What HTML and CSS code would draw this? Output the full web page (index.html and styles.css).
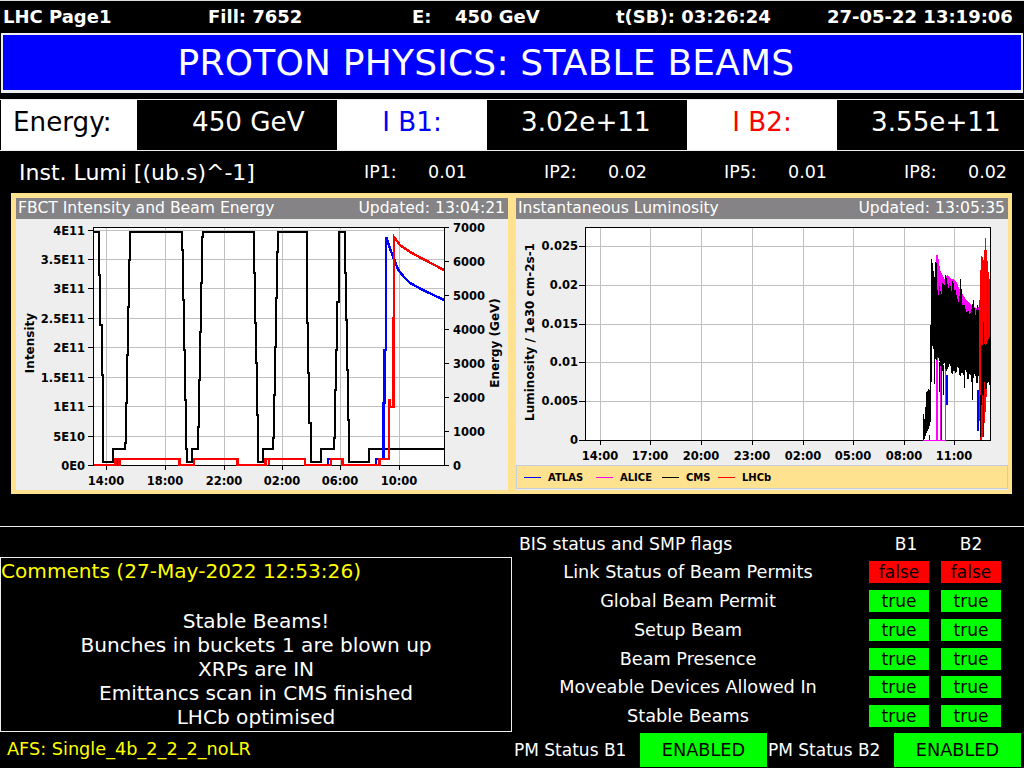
FILE: index.html
```html
<!DOCTYPE html>
<html lang="en">
<head>
    <meta charset="UTF-8">
    <title>LHC Page1</title>
    <link rel="stylesheet" href="styles.css">
</head>
<body>
    <!-- Top status line -->
    <div class="top-bar">
        <span class="top-page">LHC Page1</span>
        <span class="top-fill">Fill: 7652</span>
        <span class="top-e">E:</span>
        <span class="top-energy">450 GeV</span>
        <span class="top-sb">t(SB): 03:26:24</span>
        <span>27-05-22 13:19:06</span>
    </div>

    <div class="mode-title">PROTON PHYSICS: STABLE BEAMS</div>

    <!-- Energy and intensities -->
    <div class="readings">
        <div class="cell-label cell-energy">Energy:</div>
        <div class="cell-value cell-value-first">450 GeV</div>
        <div class="cell-label cell-b1">I B1:</div>
        <div class="cell-value">3.02e+11</div>
        <div class="cell-label cell-b2">I B2:</div>
        <div class="cell-value cell-value-last">3.55e+11</div>
    </div>

    <div class="lumi-section">
        <div class="lumi-row">
            <div class="lumi-title">Inst. Lumi [(ub.s)^-1]</div>
            <div class="lumi-ip"><span class="ip-name">IP1:</span><span>0.01</span></div>
            <div class="lumi-ip"><span class="ip-name">IP2:</span><span>0.02</span></div>
            <div class="lumi-ip"><span class="ip-name">IP5:</span><span>0.01</span></div>
            <div class="lumi-ip"><span class="ip-name">IP8:</span><span>0.02</span></div>
        </div>

        <div class="charts">
            <!-- FBCT chart: the viewBox uses page coordinates -->
            <div class="chart-panel">
                <div class="chart-head"><span>FBCT Intensity and Beam Energy</span><span>Updated: 13:04:21</span></div>
                <svg class="chart-svg chart-tall" viewBox="16 219 492 271">
                    <rect x="93.5" y="227.5" width="351" height="238" fill="#fff"/>
                    <path class="grid" d="M106.5 228V465M165.5 228V465M224.5 228V465M282.5 228V465M340.5 228V465M399.5 228V465M94 230.5H444M94 259.5H444M94 288.5H444M94 318.5H444M94 347.5H444M94 377.5H444M94 406.5H444M94 436.5H444"/>
                    <path class="axis" d="M93.5 227.5H444.5V465.5H93.5ZM88 230.5H93M88 259.5H93M88 288.5H93M88 318.5H93M88 347.5H93M88 377.5H93M88 406.5H93M88 436.5H93M88 465.5H93M444 227.5H449M444 261.5H449M444 295.5H449M444 329.5H449M444 363.5H449M444 397.5H449M444 431.5H449M444 465.5H449M106.5 465V470M165.5 465V470M224.5 465V470M282.5 465V470M340.5 465V470M399.5 465V470"/>
                    <path class="curve" stroke="#000" d="M94 232H99V275H100V325H101.5V375H102.5V425H103V462H112.7V449H124.7V443H125.7V403H126.7V355H128V307H129.3V260H130V232H181.7V250H182.7V300H184V350H185V400H186V449H187.3V462H191.7V449H198V427H199V380H200V332H201V283H202V237H203V232H254V273H255V323H256V363H257.3V415H258.3V462H263V449H272.7V438H274V395H275V347H276.3V298H277.3V252H278.3V232H306.7V273H307.3V323H308.3V373H309.3V423H311V462H320.7V449H334V438H335.3V390H336.3V350H337.3V302H338.7V252H339.3V232H345V273H345.7V320H346.7V370H347.7V420H348.7V462H368.7V449H444"/>
                    <path class="curve curve-beam" stroke="#00f" d="M118 465V459M328 465V459H330M376 465V459H383.3V403H384.7V350H386V237L391.7 253L398.3 270L404 277L410 283L423 290L444 300"/>
                    <path class="curve curve-beam" stroke="#f00" d="M94 465H115.7V459H119V465H120V459H179.3V465H194V459H237.7V465H265.7V459H269V465V459H305V465H331V459H342.7V465H379.3V459H389V400H390V407H393.3V318H394V237L400 245L410 252L423 259L444 270"/>
                    <g class="tick-text">
                        <text x="85" y="234.5">4E11</text>
                        <text x="85" y="263.5">3.5E11</text>
                        <text x="85" y="292.5">3E11</text>
                        <text x="85" y="322.5">2.5E11</text>
                        <text x="85" y="351.5">2E11</text>
                        <text x="85" y="381.5">1.5E11</text>
                        <text x="85" y="410.5">1E11</text>
                        <text x="85" y="440.5">5E10</text>
                        <text x="85" y="469.5">0E0</text>
                    </g>
                    <g class="tick-text tick-start">
                        <text x="453" y="231.5">7000</text>
                        <text x="453" y="265.5">6000</text>
                        <text x="453" y="299.5">5000</text>
                        <text x="453" y="333.5">4000</text>
                        <text x="453" y="367.5">3000</text>
                        <text x="453" y="401.5">2000</text>
                        <text x="453" y="435.5">1000</text>
                        <text x="453" y="469.5">0</text>
                    </g>
                    <g class="tick-text tick-mid">
                        <text x="106" y="485">14:00</text>
                        <text x="165" y="485">18:00</text>
                        <text x="224" y="485">22:00</text>
                        <text x="282" y="485">02:00</text>
                        <text x="340" y="485">06:00</text>
                        <text x="399" y="485">10:00</text>
                    </g>
                    <text class="axis-title" transform="translate(34 343) rotate(-90)">Intensity</text>
                    <text class="axis-title" transform="translate(499 343) rotate(-90)">Energy (GeV)</text>
                </svg>
            </div>

            <!-- Luminosity chart -->
            <div class="chart-panel">
                <div class="chart-head"><span>Instantaneous Luminosity</span><span>Updated: 13:05:35</span></div>
                <svg class="chart-svg chart-short" viewBox="516 219 492 246">
                    <rect x="585.5" y="227.5" width="405" height="213" fill="#fff"/>
                    <path class="grid" d="M600.5 228V440M650.5 228V440M701.5 228V440M752.5 228V440M803.5 228V440M853.5 228V440M904.5 228V440M954.5 228V440M586 246.5H990M586 285.5H990M586 324.5H990M586 362.5H990M586 401.5H990"/>
                    <path class="axis" d="M585.5 227.5H990.5V440.5H585.5ZM579 246.5H585M579 285.5H585M579 324.5H585M579 362.5H585M579 401.5H585M579 440.5H585M600.5 440V445M650.5 440V445M701.5 440V445M752.5 440V445M803.5 440V445M853.5 440V445M904.5 440V445M954.5 440V445"/>
                    <polygon class="noise" fill="#f0f" points="936,255 938,255 940,270 945,280 947,275 950,278 955,280 957,283 960,290 965,298 968,302 972,305 975,308 979,307 979,340 936,340"/>
                    <path class="spikes" stroke="#f0f" d="M923 440H946M936.5 340V440M937.5 340V440M940.5 345V440M945.5 352V440"/>
                    <path class="spikes" stroke="#00f" d="M977.5 390V431M978.5 390V431M946.5 375V405M947.5 375V405M986.5 374V390M929.5 435V440M930.5 350V358"/>
                    <polygon class="noise" fill="#f00" points="979,316 981,255 983,258 984,262 985,238 986,238 987,262 988,260 989,283 990,276 990,345 985,420 982,440 980,440 979,400"/>
                    <polygon class="noise" fill="#000" points="923,412 924,416 925,422 926,392 928,390 929,388 930,392 931,262 932,256 933,270 934,272 935,281 936,244 937,280 938,300 940,282 941,300 943,278 944,290 946,270 947,285 948,283 949,292 950,275 951,296 953,276 954,290 956,290 957,300 958,298 959,305 961,271 962,305 965,305 966,312 968,310 970,315 974,298 975,318 978,302 979,318 979,372 977,387 975,372 972,385 970,372 968,382 966,368 964,376 962,372 960,378 958,365 956,374 954,370 952,376 950,363 948,368 946,372 944,360 942,375 940,363 938,356 936,362 934,350 932,345 931,420 929,428 927,432 925,438 923,440"/>
                    <polygon class="noise" fill="#000" points="984,343 986,346 988,340 990,336 990,386 988,380 986,392 984,378"/>
                    <path class="spikes" stroke="#000" d="M983.5 322V437M982.5 345V395M980.5 395V437M981.5 345V405M934.5 350V384M939.5 362V392M941.5 360V440M943.5 365V395M972.5 372V400M964.5 370V388"/>
                    <g class="tick-text">
                        <text x="578" y="250">0.025</text>
                        <text x="578" y="289">0.02</text>
                        <text x="578" y="328">0.015</text>
                        <text x="578" y="366">0.01</text>
                        <text x="578" y="405">0.005</text>
                        <text x="578" y="444">0</text>
                    </g>
                    <g class="tick-text tick-mid">
                        <text x="600" y="460">14:00</text>
                        <text x="650" y="460">17:00</text>
                        <text x="701" y="460">20:00</text>
                        <text x="752" y="460">23:00</text>
                        <text x="803" y="460">02:00</text>
                        <text x="853" y="460">05:00</text>
                        <text x="904" y="460">08:00</text>
                        <text x="954" y="460">11:00</text>
                    </g>
                    <text class="axis-title" transform="translate(534 332) rotate(-90)">Luminosity / 1e30 cm-2s-1</text>
                </svg>
                <div class="legend">
                    <span class="legend-line line-atlas"></span><span class="legend-name name-atlas">ATLAS</span>
                    <span class="legend-line line-alice"></span><span class="legend-name name-alice">ALICE</span>
                    <span class="legend-line line-cms"></span><span class="legend-name name-cms">CMS</span>
                    <span class="legend-line line-lhcb"></span><span class="legend-name">LHCb</span>
                </div>
            </div>
        </div>
    </div>

    <div class="lower">
        <!-- Comments -->
        <div class="lower-left">
            <div class="comments">
                <div class="comments-title">Comments (27-May-2022 12:53:26)</div>
                <div class="comments-text">
                    <div>Stable Beams!</div>
                    <div>Bunches in buckets 1 are blown up</div>
                    <div>XRPs are IN</div>
                    <div>Emittancs scan in CMS finished</div>
                    <div>LHCb optimised</div>
                </div>
            </div>
            <div class="afs">AFS: Single_4b_2_2_2_noLR</div>
        </div>

        <!-- BIS flags -->
        <div class="lower-right">
            <div class="flags">
                <div class="flags-title">BIS status and SMP flags</div>
                <div class="flags-beam flags-beam-first">B1</div>
                <div class="flags-beam">B2</div>

                <div class="flag-name">Link Status of Beam Permits</div>
                <div class="flag flag-false">false</div>
                <div class="flag flag-false">false</div>

                <div class="flag-name">Global Beam Permit</div>
                <div class="flag flag-true">true</div>
                <div class="flag flag-true">true</div>

                <div class="flag-name">Setup Beam</div>
                <div class="flag flag-true">true</div>
                <div class="flag flag-true">true</div>

                <div class="flag-name">Beam Presence</div>
                <div class="flag flag-true">true</div>
                <div class="flag flag-true">true</div>

                <div class="flag-name">Moveable Devices Allowed In</div>
                <div class="flag flag-true">true</div>
                <div class="flag flag-true">true</div>

                <div class="flag-name">Stable Beams</div>
                <div class="flag flag-true">true</div>
                <div class="flag flag-true">true</div>
            </div>
            <div class="pm-row">
                <div class="pm-name">PM Status B1</div>
                <div class="pm-state">ENABLED</div>
                <div class="pm-name pm-name-second">PM Status B2</div>
                <div class="pm-state">ENABLED</div>
            </div>
        </div>
    </div>
</body>
</html>
```

FILE: styles.css
```css
html, body {
    margin: 0;
    height: 768px;
    overflow: hidden;
}

body {
    background-color: #000;
    color: #fff;
    font-family: "DejaVu Sans", sans-serif;
}

/* Top status line */
.top-bar {
    display: flex;
    align-items: center;
    height: 30px;
    border-top: 1px solid #ddd;
    padding: 0 0 2px 3px;
    font-size: 18px;
    font-weight: bold;
    white-space: nowrap;
}

.top-page { width: 205px; }
.top-fill { width: 204px; }
.top-e { width: 43px; }
.top-energy { width: 161px; }
.top-sb { width: 211px; }

/* Machine mode title */
.mode-title {
    height: 55px;
    line-height: 55px;
    margin: 0 1px 6px;
    padding-right: 52px;
    border: 2px solid #eee;
    border-bottom-width: 3px;
    background-color: #00f;
    text-align: center;
    font-size: 36px;
    letter-spacing: 0.2px;
}

/* Energy and intensity row */
.readings {
    display: flex;
    height: 50px;
    border-top: 1px solid #eee;
    border-bottom: 1px solid #eee;
    line-height: 45px;
    font-size: 26.2px;
    white-space: nowrap;
}

.cell-label {
    width: 150px;
    background-color: #fff;
    color: #000;
    text-align: center;
}

.cell-energy {
    width: 124px;
    margin-left: 1px;
    padding-left: 12px;
    text-align: left;
}

.cell-b1 { color: #00f; }
.cell-b2 { color: #f00; }

.cell-value {
    width: 166px;
    padding-left: 34px;
}

.cell-value-first {
    width: 145px;
    padding-left: 55px;
}

.cell-value-last {
    flex: 1;
}

/* Luminosity section */
.lumi-section {
    height: 375px;
    border-bottom: 1px solid #eee;
}

.lumi-row {
    display: flex;
    align-items: center;
    height: 42px;
    font-size: 17.5px;
    white-space: nowrap;
}

.lumi-title {
    width: 345px;
    padding-left: 19px;
    font-size: 22px;
    flex: none;
}

.lumi-ip {
    display: flex;
    flex: none;
    width: 180px;
}

.lumi-ip:last-child {
    width: auto;
}

.ip-name {
    width: 64px;
}

/* Charts */
.charts {
    display: flex;
    gap: 8px;
    width: 992px;
    margin-left: 11px;
    padding: 5px 4px 4px 5px;
    background-color: #ffe28f;
}

.chart-panel {
    width: 492px;
    height: 292px;
    background-color: #eee;
    overflow: hidden;
}

.chart-head {
    display: flex;
    justify-content: space-between;
    height: 21px;
    padding: 0 3px 0 2px;
    background-color: #858385;
    line-height: 21px;
    font-size: 15.6px;
    white-space: nowrap;
}

.chart-svg {
    display: block;
    width: 492px;
}

.chart-tall { height: 271px; }
.chart-short { height: 246px; }

.grid {
    fill: none;
    stroke: #c0c0c0;
    stroke-width: 1;
    shape-rendering: crispEdges;
}

.axis {
    fill: none;
    stroke: #000;
    stroke-width: 1;
    shape-rendering: crispEdges;
}

.curve {
    fill: none;
    stroke-width: 2;
    shape-rendering: crispEdges;
}

.curve-beam {
    stroke-width: 2.5;
}

.noise {
    shape-rendering: crispEdges;
}

.spikes {
    fill: none;
    stroke-width: 1;
    shape-rendering: crispEdges;
}

.tick-text text {
    font-size: 11.5px;
    font-weight: bold;
    text-anchor: end;
}

.tick-start text { text-anchor: start; }
.tick-mid text { text-anchor: middle; }

.axis-title {
    font-size: 12px;
    font-weight: bold;
    text-anchor: middle;
}

/* Legend under the luminosity plot */
.legend {
    display: flex;
    align-items: center;
    height: 22px;
    margin-bottom: 1px;
    border: 1px solid #c6cdd8;
    background-color: #ffe28f;
    color: #000;
    font-size: 10px;
    font-weight: bold;
    padding-left: 7px;
}

.legend-line {
    width: 17px;
    height: 1px;
    margin-right: 7px;
}

.line-atlas { background-color: #00f; }
.line-alice { background-color: #f0f; }
.line-cms { background-color: #000; }
.line-lhcb { background-color: #f00; }

.name-atlas { width: 48px; }
.name-alice { width: 42px; }
.name-cms { width: 32px; }

/* Lower half */
.lower {
    display: flex;
    height: 241px;
}

.lower-left {
    width: 512px;
    padding-top: 30px;
    box-sizing: border-box;
}

.comments {
    height: 173px;
    border: 1px solid #eee;
    font-size: 20.1px;
}

.comments-title {
    height: 26px;
    line-height: 26px;
    color: #ff0;
}

.comments-text {
    margin-top: 25px;
    line-height: 24px;
    text-align: center;
}

.afs {
    padding: 7px 0 0 7px;
    font-size: 17.7px;
    color: #ff0;
}

.lower-right {
    flex: 1;
}

.flags {
    display: grid;
    grid-template-columns: 352px 60px 67px;
    grid-template-rows: 34px 29px 29px 29px 28px 29px 28px;
    column-gap: 5px;
    height: 206px;
    font-size: 17.7px;
    text-align: center;
    white-space: nowrap;
}

.flags > :nth-child(3n) {
    margin-left: 7px;
}

.flags-title {
    padding-left: 7px;
    font-size: 17.3px;
    line-height: 34px;
    text-align: left;
}

.flags-beam {
    font-size: 17px;
    line-height: 34px;
}

.flags-beam-first {
    padding-left: 14px;
}

.flag-name,
.flag {
    height: 22px;
    line-height: 22px;
}

.flag {
    font-size: 17px;
}

.flag-false {
    background-color: #f00;
    color: #000;
}

.flag-true {
    background-color: #0f0;
    color: #000;
}

.pm-row {
    display: flex;
    height: 34px;
    line-height: 34px;
    font-size: 17.7px;
    white-space: nowrap;
}

.pm-name {
    width: 126px;
    padding-left: 2px;
    font-size: 17px;
}

.pm-name-second {
    padding-left: 1px;
}

.pm-state {
    width: 127px;
    background-color: #0f0;
    color: #000;
    text-align: center;
}
```
